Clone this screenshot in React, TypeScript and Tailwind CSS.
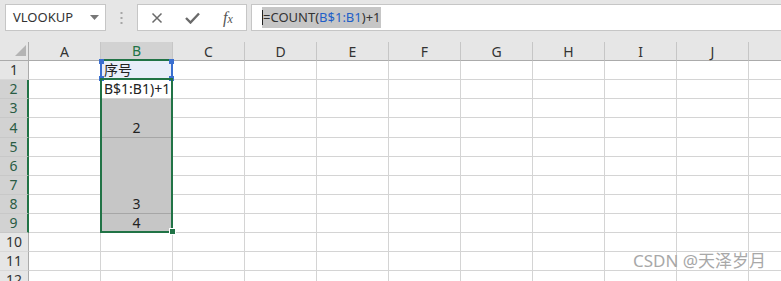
import React from "react";

const COLS = ["A", "B", "C", "D", "E", "F", "G", "H", "I", "J"];
const ROW_H = [19, 19, 19, 20, 19, 19, 19, 19, 19, 19, 19, 19];

function Cell({
  row,
  col,
  span = 1,
  className = "",
  children,
}: {
  row: number;
  col: number;
  span?: number;
  className?: string;
  children?: React.ReactNode;
}) {
  return (
    <div
      className={`border-r border-b border-[#d4d4d4] overflow-hidden ${className}`}
      style={{ gridRow: `${row} / span ${span}`, gridColumn: `${col}` }}
    >
      {children}
    </div>
  );
}

export default function App() {
  const font = { fontFamily: '"Noto Sans", "Noto Sans CJK SC", sans-serif' };
  const cells: React.ReactNode[] = [];
  cells.push(
    <div
      key="corner"
      className="relative bg-[#e6e6e6] border-r border-b border-[#ababab]"
      style={{ gridRow: "1", gridColumn: "1" }}
    >
      <svg className="absolute left-[15px] top-[3px]" width="12" height="12" viewBox="0 0 12 12">
        <polygon points="11,0 11,11 0,11" fill="#b4b4b4" />
      </svg>
    </div>
  );
  COLS.forEach((c, i) => {
    const sel = c === "B";
    cells.push(
      <div
        key={"h" + c}
        className={`flex items-center justify-center text-[14px] leading-none pt-[1px] ${
          sel
            ? "bg-[#d2d2d2] text-[#217346] border-b-2 border-b-[#217346] border-r border-r-[#c6c6c6]"
            : "bg-[#e6e6e6] text-[#333] border-b border-b-[#ababab] border-r border-r-[#c6c6c6]"
        }`}
        style={{ gridRow: "1", gridColumn: `${i + 2}` }}
      >
        {c}
      </div>
    );
  });
  cells.push(
    <div
      key="hrest"
      className="bg-[#e6e6e6] border-b border-[#ababab]"
      style={{ gridRow: "1", gridColumn: "12" }}
    />
  );
  for (let r = 1; r <= 12; r++) {
    const sel = r >= 2 && r <= 9;
    cells.push(
      <div
        key={"r" + r}
        className={`flex items-center justify-center text-[14px] leading-none border-b ${
          sel
            ? "bg-[#d2d2d2] text-[#2a5c44] border-b-[#c8c8c8] border-r-2 border-r-[#217346]"
            : "bg-[#e6e6e6] text-[#333] border-b-[#d8d8d8] border-r border-r-[#ababab]"
        }`}
        style={{ gridRow: `${r + 1}`, gridColumn: "1" }}
      >
        {r}
      </div>
    );
    for (let c = 2; c <= 12; c++) {
      if (c === 3) continue;
      cells.push(
        <Cell key={`c${r}-${c}`} row={r + 1} col={c} className={c === 12 ? "border-r-0" : ""} />
      );
    }
  }
  cells.push(
    <Cell key="b1" row={2} col={3} className="bg-[#e8eef9] text-[14px] leading-[18px] pl-[3px] text-[#222]">
      序号
    </Cell>
  );
  cells.push(
    <Cell key="b2" row={3} col={3} className="bg-white text-[14px] leading-[18px] pl-[3px] text-[#222] whitespace-nowrap">
      B$1:B1)+1
    </Cell>
  );
  cells.push(
    <Cell key="b3" row={4} col={3} span={2} className="bg-[#c6c6c6] border-b-[#a6a6a6] flex items-end justify-center text-[14px] leading-[18px] text-[#222]">
      2
    </Cell>
  );
  cells.push(
    <Cell key="b5" row={6} col={3} span={4} className="bg-[#c6c6c6] border-b-[#a6a6a6] flex items-end justify-center text-[14px] leading-[18px] text-[#222]">
      3
    </Cell>
  );
  cells.push(
    <Cell key="b9" row={10} col={3} className="bg-[#c6c6c6] flex items-end justify-center text-[14px] leading-[18px] text-[#222]">
      4
    </Cell>
  );
  for (let r = 11; r <= 13; r++) {
    cells.push(<Cell key={`b${r}`} row={r} col={3} />);
  }

  return (
    <div className="w-[781px] h-[281px] overflow-hidden bg-white relative" style={font}>
      {/* formula bar */}
      <div className="h-[42px] bg-[#e6e6e6] flex items-start pt-[4px] pl-[5px]">
        <div className="w-[101px] h-[27px] bg-white border border-[#c6c6c6] flex items-center pl-[7px] pr-[6px] text-[13px] text-[#333]">
          <span className="flex-1">VLOOKUP</span>
          <svg width="9" height="5" viewBox="0 0 9 5">
            <polygon points="0,0 9,0 4.5,5" fill="#777" />
          </svg>
        </div>
        <div className="w-[31px] h-[27px] flex items-center justify-center">
          <svg width="3" height="12" viewBox="0 0 3 12">
            <rect x="0.5" y="0" width="2" height="2" fill="#a6a6a6" />
            <rect x="0.5" y="5" width="2" height="2" fill="#a6a6a6" />
            <rect x="0.5" y="10" width="2" height="2" fill="#a6a6a6" />
          </svg>
        </div>
        <div className="w-[110px] h-[27px] bg-white border border-[#c6c6c6] flex items-center">
          <div className="w-[36px] flex justify-center pl-[2px]">
            <svg width="12" height="12" viewBox="0 0 12 12">
              <path d="M1.5 1.5 L10.5 10.5 M10.5 1.5 L1.5 10.5" stroke="#6a6a6a" strokeWidth="1.5" fill="none" />
            </svg>
          </div>
          <div className="w-[36px] flex justify-center">
            <svg width="15" height="12" viewBox="0 0 15 12">
              <path d="M1 6 L5.5 10.5 L14 1.5" stroke="#6a6a6a" strokeWidth="2.4" fill="none" />
            </svg>
          </div>
          <div
            className="w-[36px] flex justify-center text-[#555] italic text-[16px] leading-none"
            style={{ fontFamily: '"Liberation Serif", serif' }}
          >
            <span>
              f<span className="text-[12px]">x</span>
            </span>
          </div>
        </div>
        <div className="flex-1 ml-[4px] h-[27px] bg-white border-t border-b border-l border-[#c6c6c6] flex items-center pl-[10px]">
          <div className="relative bg-[#c6c6c6] h-[21px] flex items-center pl-[1px] pr-0 text-[13px] text-[#333] whitespace-nowrap">
            <span className="absolute left-0 top-[3px] w-[1px] h-[15px] bg-[#222]" />
            <span>=COUNT(</span>
            <span className="text-[#1f5fc8]">B$1:B1</span>
            <span>)+1</span>
          </div>
        </div>
      </div>
      {/* grid */}
      <div
        className="grid relative"
        style={{
          gridTemplateColumns: "29px repeat(10, 72px) 1fr",
          gridTemplateRows: "19px " + ROW_H.map((h) => h + "px").join(" "),
        }}
      >
        {cells}
        <div className="absolute left-[100px] top-[18px] w-[73px] h-[20px] border-l-2 border-r-2 border-[#3a6fd0] pointer-events-none" />
        <div className="absolute left-[99px] top-[17px] w-[5px] h-[5px] bg-[#3a6fd0]" />
        <div className="absolute left-[169px] top-[17px] w-[5px] h-[5px] bg-[#3a6fd0]" />
        <div className="absolute left-[99px] top-[34px] w-[5px] h-[5px] bg-[#3a6fd0]" />
        <div className="absolute left-[169px] top-[34px] w-[5px] h-[5px] bg-[#3a6fd0]" />
        <div className="absolute left-[100px] top-[36px] w-[73px] h-[155px] border-2 border-[#217346] pointer-events-none" />
        <div className="absolute left-[169px] top-[186px] w-[7px] h-[7px] bg-[#217346] border border-white" />
      </div>
      <div className="absolute left-[633px] top-[251px] text-[17px] leading-[20px] text-[#a8a8a8] whitespace-nowrap">
        CSDN @天泽岁月
      </div>
    </div>
  );
}
